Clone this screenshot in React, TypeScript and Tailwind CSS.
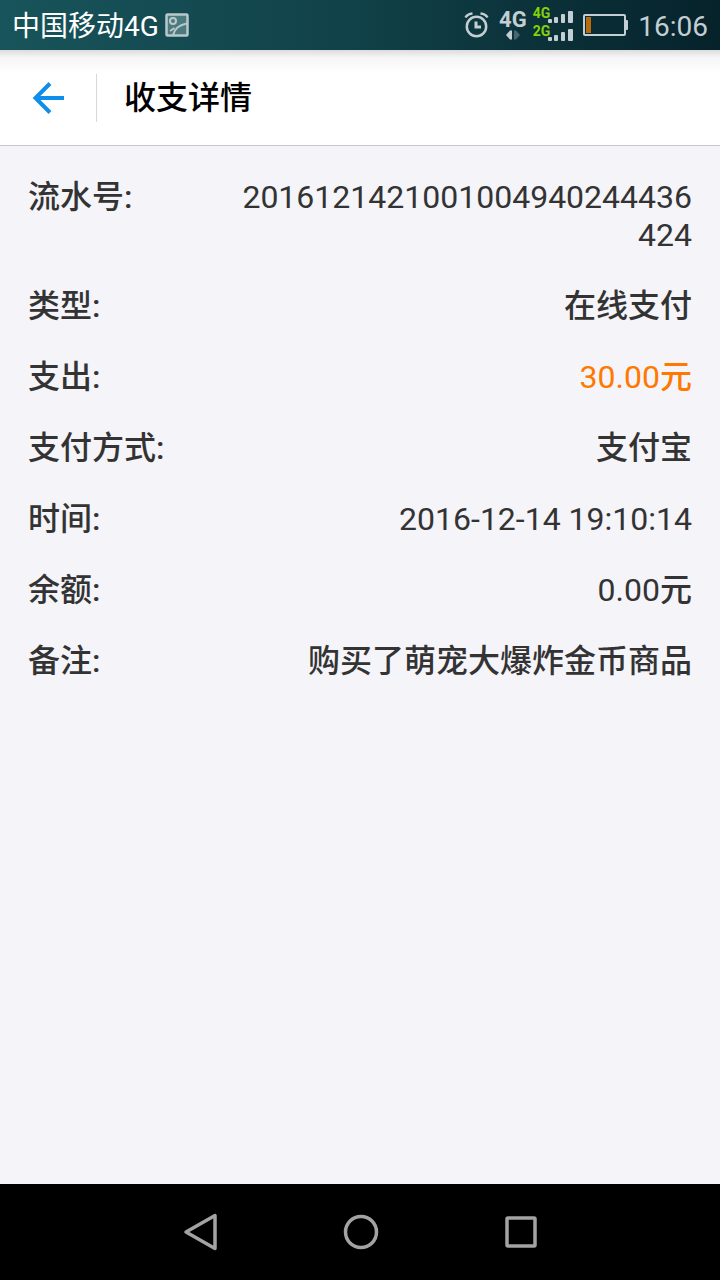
import type { ReactNode } from 'react'

interface Entry {
  label: string
  value: string
  unit?: string
  numeric?: boolean
  highlight?: boolean
}

const entries: Entry[] = [
  { label: '流水号', value: '2016121421001004940244436424', numeric: true },
  { label: '类型', value: '在线支付' },
  { label: '支出', value: '30.00', unit: '元', numeric: true, highlight: true },
  { label: '支付方式', value: '支付宝' },
  { label: '时间', value: '2016-12-14 19:10:14', numeric: true },
  { label: '余额', value: '0.00', unit: '元', numeric: true },
  { label: '备注', value: '购买了萌宠大爆炸金币商品' },
]

export default function App() {
  return (
    <div className="min-h-screen flex flex-col bg-[#f4f4f9] font-['Roboto','Noto_Sans_CJK_SC',sans-serif]">
      <StatusBar />
      <Header title="收支详情" />
      <main className="flex-1 px-7 pt-8 pb-8">
        <dl className="flex flex-col gap-[33px] text-[32px] leading-[38px] text-[#333333]">
          {entries.map((e) => (
            <EntryRow key={e.label} entry={e} />
          ))}
        </dl>
      </main>
      <NavBar />
    </div>
  )
}

function EntryRow({ entry }: { entry: Entry }) {
  const { label, value, unit, numeric, highlight } = entry
  return (
    <div className="flex justify-between">
      <dt className="shrink-0 font-medium">{label}:</dt>
      <dd
        className={`max-w-[460px] break-all text-right ${numeric ? '' : 'font-medium'} ${highlight ? 'text-[#ff7800]' : ''}`}
      >
        {value}
        {unit && <span className="font-medium">{unit}</span>}
      </dd>
    </div>
  )
}

// ─── Status bar ───────────────────────────────────────────────────────────────

function StatusBar() {
  return (
    <div className="h-[50px] flex items-center justify-between px-3 bg-linear-to-r from-[#18545b] via-[#114148] to-[#06222b] text-[#c3cfd2]">
      <div className="flex items-center gap-1.5">
        <span className="pt-1 text-[28px] leading-8 text-white">中国移动4G</span>
        <PictureIcon />
      </div>
      <div className="flex items-center gap-2.5">
        <AlarmIcon />
        <div className="flex items-center gap-1.5">
          <div className="flex flex-col items-center">
            <span className="text-[22px] leading-5 font-bold">4G</span>
            <svg width="16" height="10" viewBox="0 0 16 10">
              <path d="M1 5 5 .5h2v9H5z" fill="currentColor" />
              <path d="M9 .5h2L15 5l-4 4.500H9z" fill="#4a666d" />
            </svg>
          </div>
          <div className="flex flex-col">
            <SignalRow label="4G" />
            <SignalRow label="2G" />
          </div>
        </div>
        <BatteryIcon />
        <span className="pt-1 text-[28px] leading-8">16:06</span>
      </div>
    </div>
  )
}

function SignalRow({ label }: { label: string }) {
  return (
    <div className="flex items-start h-[18px]">
      <span className="text-[14px] leading-3 font-bold text-[#84d20a]">{label}</span>
      <svg className="-ml-0.5 mt-1" width="25" height="12" viewBox="0 0 25 12" fill="currentColor">
        <rect x="0" y="8" width="4" height="4" rx="1" />
        <rect x="6" y="6" width="4" height="6" rx="1" />
        <rect x="13" y="3" width="4" height="9" rx="1" />
        <rect x="20" y="0" width="5" height="12" rx="1" />
      </svg>
    </div>
  )
}

function PictureIcon() {
  return (
    <svg width="24" height="24" viewBox="0 0 24 24" fill="none" stroke="#b9c9cb" strokeWidth="2.500">
      <rect x="1.500" y="1.500" width="21" height="21" rx="1" fill="#4d7a7f" />
      <circle cx="8" cy="8" r="3" strokeWidth="2" />
      <path d="M8 22C10 15 14 12 22 10.500M5 18l4.500-3" strokeWidth="2" />
    </svg>
  )
}

function AlarmIcon() {
  return (
    <svg width="25" height="26" viewBox="0 0 25 26" fill="none" stroke="currentColor" strokeWidth="2.500">
      <circle cx="12.500" cy="14.500" r="9.700" />
      <path d="M12 9.500v5.500h5" strokeWidth="3" />
      <path d="M1.500 5.500Q3.500 2 8.500 1.500M23.500 5.500Q21.500 2 16.500 1.500" />
    </svg>
  )
}

function BatteryIcon() {
  return (
    <svg width="45" height="22" viewBox="0 0 45 22">
      <rect x="1" y="1" width="41" height="20" rx="1" fill="none" stroke="currentColor" strokeWidth="2" />
      <rect x="3" y="3" width="5" height="16" fill="#b96c0c" />
      <rect x="42" y="6" width="3" height="10" rx="1" fill="currentColor" />
    </svg>
  )
}

// ─── Header ───────────────────────────────────────────────────────────────────

function Header({ title }: { title: string }) {
  return (
    <header className="h-24 flex items-center border-b border-[#c8c8cc] bg-linear-to-b from-[#dcdcdc] via-[#f6f6f6] via-8% to-white to-25%">
      <button type="button" aria-label="返回" className="w-24 h-12 flex items-center justify-center">
        <svg width="32" height="32" viewBox="0 0 32 32" fill="none" stroke="#108ee9" strokeWidth="4">
          <path d="M32 16H4M18 1.500 3.500 16 18 30.500" />
        </svg>
      </button>
      <div className="w-px h-12 bg-[#d8d8d8]" />
      <h1 className="ml-[27px] text-[32px] leading-[38px] font-medium text-black">{title}</h1>
    </header>
  )
}

// ─── Navigation bar ───────────────────────────────────────────────────────────

function NavBar() {
  return (
    <nav className="h-24 flex justify-center bg-black">
      <NavButton label="后退">
        <path d="M36 4.500v33L7 21z" />
      </NavButton>
      <NavButton label="主屏幕">
        <circle cx="22" cy="21" r="15.500" />
      </NavButton>
      <NavButton label="最近任务">
        <rect x="8" y="7" width="28" height="28" rx="1" />
      </NavButton>
    </nav>
  )
}

function NavButton({ label, children }: { label: string; children: ReactNode }) {
  return (
    <button type="button" aria-label={label} className="w-40 flex items-center justify-center">
      <svg width="42" height="42" viewBox="0 0 42 42" fill="none" stroke="#a3a3a3" strokeWidth="3.500" strokeLinejoin="round">
        {children}
      </svg>
    </button>
  )
}
